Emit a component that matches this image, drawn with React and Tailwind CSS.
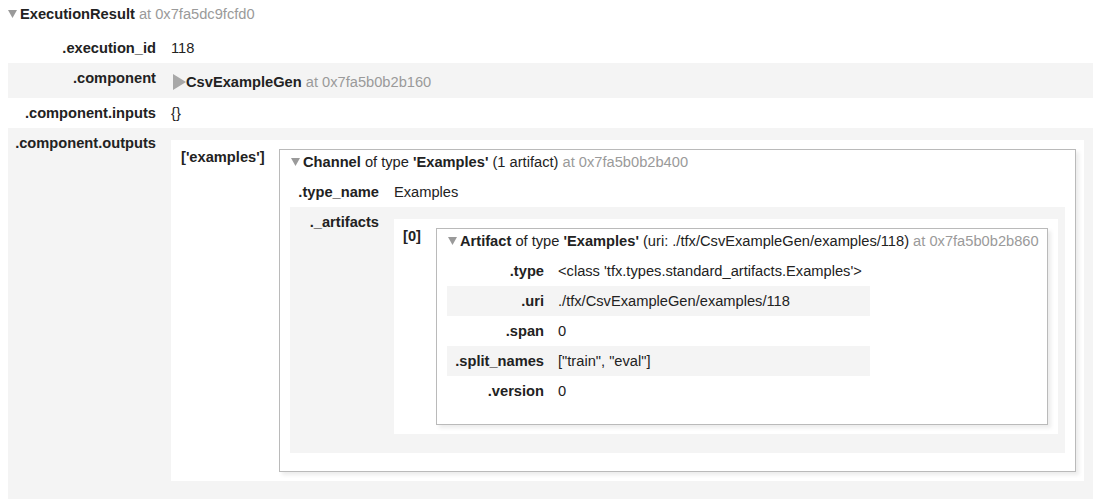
const Down = () => (
  <svg width="9" height="8" viewBox="0 0 9 8" className="shrink-0">
    <path d="M0 0 L9 0 L4.5 8 Z" fill="#9a9a9a" />
  </svg>
);

const Right = () => (
  <svg width="13" height="16" viewBox="0 0 13 16" className="shrink-0">
    <path d="M0 0 L13 8 L0 16 Z" fill="#a8a8a8" />
  </svg>
);

const Addr = ({ children }) => <span className="text-[#9a9a9a]"> at {children}</span>;

const Row = ({ k, keyW, gray, children, valueCls = 'py-[7px]', keyPad = 'pt-[7px]' }) => (
  <div className={`flex ${gray ? 'bg-[#f4f4f4]' : ''}`}>
    <div className={`${keyW} ${keyPad} shrink-0 pr-2 text-right font-bold`}>{k}</div>
    <div className={`min-w-0 ${valueCls}`}>{children}</div>
  </div>
);

const ArtifactBox = () => (
  <div className="border border-[#bababa] bg-white pb-[18px] shadow-[3px_3px_4px_rgba(0,0,0,0.08)]">
    <div className="flex h-[16px] items-center pl-[11px] pt-[4px] box-content">
      <Down />
      <span className="ml-[3px] whitespace-nowrap">
        <b>Artifact</b> of type <b>'Examples'</b> (uri: ./tfx/CsvExampleGen/examples/118)
        <Addr>0x7fa5b0b2b860</Addr>
      </span>
    </div>
    <div className="mt-[7px] ml-[10px] w-fit">
      <Row k=".type" keyW="w-[105px]" valueCls="py-[7px] pl-[6px] pr-2 whitespace-nowrap">
        &lt;class 'tfx.types.standard_artifacts.Examples'&gt;
      </Row>
      <Row k=".uri" keyW="w-[105px]" gray valueCls="py-[7px] pl-[6px] pr-2">
        ./tfx/CsvExampleGen/examples/118
      </Row>
      <Row k=".span" keyW="w-[105px]" valueCls="py-[7px] pl-[6px] pr-2">0</Row>
      <Row k=".split_names" keyW="w-[105px]" gray valueCls="py-[7px] pl-[6px] pr-2">
        ["train", "eval"]
      </Row>
      <Row k=".version" keyW="w-[105px]" valueCls="py-[7px] pl-[6px] pr-2">0</Row>
    </div>
  </div>
);

const ChannelBox = () => (
  <div className="border border-[#bababa] bg-white pb-[18px] shadow-[3px_3px_4px_rgba(0,0,0,0.08)]">
    <div className="flex h-[16px] items-center pl-[11px] pt-[4px] box-content">
      <Down />
      <span className="ml-[3px] whitespace-nowrap">
        <b>Channel</b> of type <b>'Examples'</b> (1 artifact)
        <Addr>0x7fa5b0b2b400</Addr>
      </span>
    </div>
    <div className="mt-[7px] mx-[10px]">
      <Row k=".type_name" keyW="w-[97px]" valueCls="py-[7px] pl-[7px]">Examples</Row>
      <div className="flex bg-[#f4f4f4]">
        <div className="w-[97px] shrink-0 pr-2 pt-[7px] text-right font-bold">._artifacts</div>
        <div className="flex-1 pl-[7px] pr-[7px] pt-[12px] pb-[19px]">
          <div className="flex bg-white py-[9px] pl-[9px] pr-[10px]">
            <div className="w-[26px] shrink-0 font-bold">[0]</div>
            <div className="ml-[7px] flex-1">
              <ArtifactBox />
            </div>
          </div>
        </div>
      </div>
    </div>
  </div>
);

export default function App() {
  return (
    <div className="min-h-[499px] bg-white px-2 pt-[6px] font-['Liberation_Sans',Arial,sans-serif] text-[14.667px] leading-[16px] text-[#222]">
      <div className="flex h-[16px] items-center">
        <Down />
        <span className="ml-[3px]">
          <b>ExecutionResult</b>
          <Addr>0x7fa5dc9fcfd0</Addr>
        </span>
      </div>
      <div className="mt-[11px] w-[1085px]">
        <Row k=".execution_id" keyW="w-[156px]" valueCls="py-[7px] pl-[7px]">118</Row>
        <Row k=".component" keyW="w-[156px]" gray valueCls="pt-[8px] pb-[6px] pl-[9px]">
          <div className="flex h-[21px] items-center">
            <Right />
            <span>
              <b>CsvExampleGen</b>
              <Addr>0x7fa5b0b2b160</Addr>
            </span>
          </div>
        </Row>
        <Row k=".component.inputs" keyW="w-[156px]" valueCls="py-[7px] pl-[7px]">{'{}'}</Row>
        <div className="flex bg-[#f4f4f4]">
          <div className="w-[156px] shrink-0 pr-2 pt-[7px] text-right font-bold">.component.outputs</div>
          <div className="flex-1 pl-[7px] pr-[9px] pt-[12px] pb-[30px]">
            <div className="flex bg-white py-[9px] pl-[10px] pr-2">
              <div className="w-[91px] shrink-0 font-bold">['examples']</div>
              <div className="ml-[7px] flex-1">
                <ChannelBox />
              </div>
            </div>
          </div>
        </div>
      </div>
    </div>
  );
}
